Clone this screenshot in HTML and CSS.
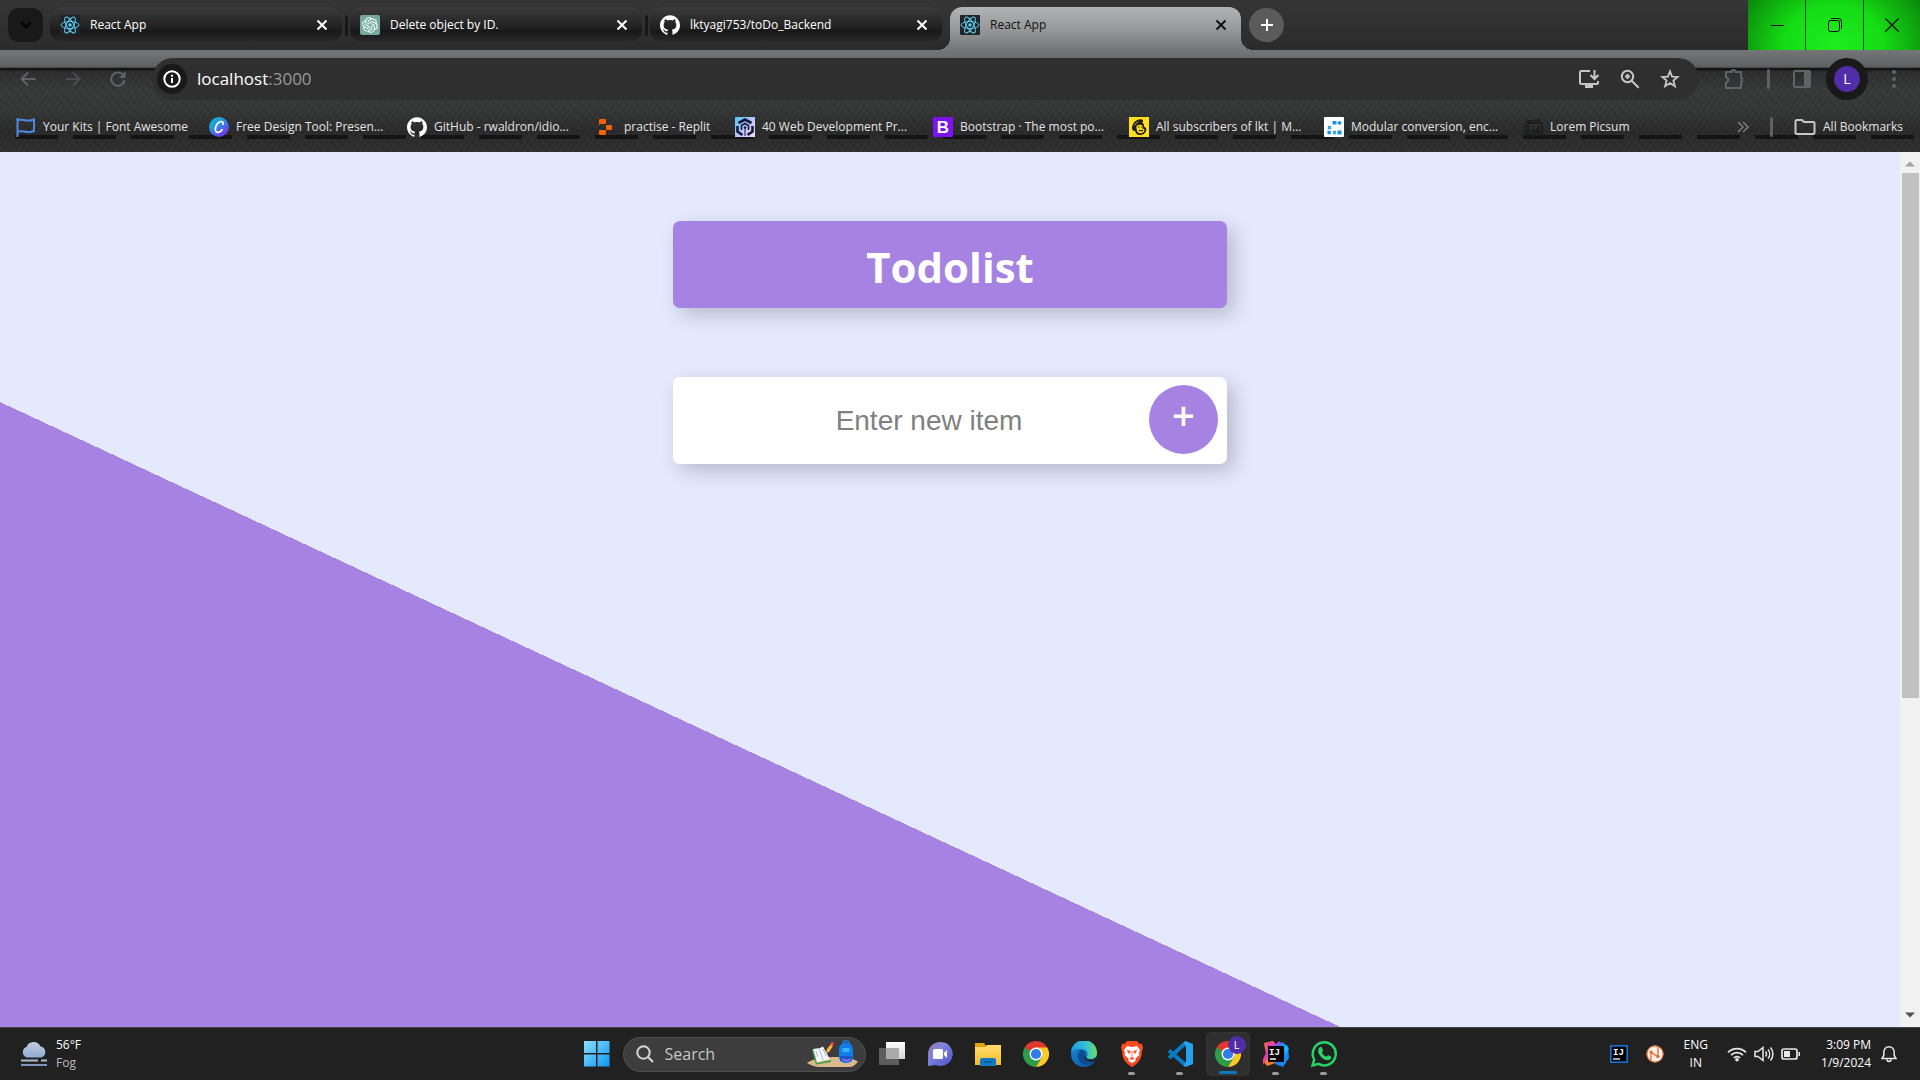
FILE: index.html
```html
<!DOCTYPE html>
<html lang="en">
<head>
<meta charset="utf-8">
<title>React App</title>
<link rel="stylesheet" href="styles.css">
</head>
<body>
<svg class="defs" width="0" height="0" aria-hidden="true">
  <defs>
    <linearGradient id="canva" x1="0" y1="0" x2=".7" y2="1"><stop offset="0" stop-color="#00c4cc"/><stop offset=".5" stop-color="#2f8ee0"/><stop offset="1" stop-color="#7d2ae8"/></linearGradient>
    <linearGradient id="web" x1="0" y1="0" x2="1" y2="1"><stop offset="0" stop-color="#49c3f5"/><stop offset=".5" stop-color="#b9c3ff"/><stop offset="1" stop-color="#ffd9f5"/></linearGradient>
    <linearGradient id="win" x1="0" y1="0" x2="1" y2="1"><stop offset="0" stop-color="#8be0ff"/><stop offset="1" stop-color="#0a96f0"/></linearGradient>
    <linearGradient id="cloud" x1="0" y1="0" x2="0" y2="1"><stop offset="0" stop-color="#c3cbd6"/><stop offset="1" stop-color="#8fadd8"/></linearGradient>
    <linearGradient id="chat" x1="0" y1="0" x2="1" y2="1"><stop offset="0" stop-color="#9b7aa8"/><stop offset=".4" stop-color="#7c83dc"/><stop offset="1" stop-color="#4b50c8"/></linearGradient>
    <linearGradient id="folder" x1="0" y1="0" x2="0" y2="1"><stop offset="0" stop-color="#ffdc70"/><stop offset="1" stop-color="#f6bd2a"/></linearGradient>
    <linearGradient id="edgeTop" x1="0" y1="0" x2="1" y2="0"><stop offset="0" stop-color="#1b9de2"/><stop offset=".6" stop-color="#35c1d0"/><stop offset="1" stop-color="#6be060"/></linearGradient>
    <linearGradient id="edgeLow" x1="0" y1="0" x2="1" y2="1"><stop offset="0" stop-color="#1b8fdc"/><stop offset="1" stop-color="#0b4a94"/></linearGradient>
    <linearGradient id="sheet" x1="0" y1="0" x2="0" y2="1"><stop offset="0" stop-color="#fff"/><stop offset="1" stop-color="#d4d4d4"/></linearGradient>
    <symbol id="react" viewBox="0 0 20 20">
      <rect width="20" height="20" rx="1" fill="#20232a"/>
      <g fill="none" stroke="#5ccfee" stroke-width="1"><ellipse cx="10" cy="10" rx="9" ry="3.5"/><ellipse cx="10" cy="10" rx="9" ry="3.5" transform="rotate(60 10 10)"/><ellipse cx="10" cy="10" rx="9" ry="3.5" transform="rotate(120 10 10)"/></g>
      <circle cx="10" cy="10" r="1.7" fill="#5ccfee"/>
    </symbol>
    <symbol id="github" viewBox="0 0 24 24"><path fill="#fff" d="M12 .297c-6.63 0-12 5.373-12 12 0 5.303 3.438 9.8 8.205 11.385.6.113.82-.258.82-.577 0-.285-.01-1.04-.015-2.04-3.338.724-4.042-1.61-4.042-1.61C4.422 18.07 3.633 17.7 3.633 17.7c-1.087-.744.084-.729.084-.729 1.205.084 1.838 1.236 1.838 1.236 1.07 1.835 2.809 1.305 3.495.998.108-.776.417-1.305.76-1.605-2.665-.3-5.466-1.332-5.466-5.93 0-1.31.465-2.38 1.235-3.22-.135-.303-.54-1.523.105-3.176 0 0 1.005-.322 3.3 1.23.96-.267 1.98-.399 3-.405 1.02.006 2.04.138 3 .405 2.28-1.552 3.285-1.23 3.285-1.23.645 1.653.24 2.873.12 3.176.765.84 1.23 1.91 1.23 3.22 0 4.61-2.805 5.625-5.475 5.92.42.36.81 1.096.81 2.22 0 1.606-.015 2.896-.015 3.286 0 .315.21.69.825.57C20.565 22.092 24 17.592 24 12.297c0-6.627-5.373-12-12-12"/></symbol>
    <symbol id="close" viewBox="0 0 12 12"><path d="M1.500 1.500l9 9M10.500 1.500l-9 9" fill="none" stroke="currentColor" stroke-width="2"/></symbol>
    <symbol id="chrome" viewBox="0 0 26 26">
      <path d="M13 13L1.740 6.500A13 13 0 0 1 24.260 6.500Z" fill="#e0392c"/>
      <path d="M13 13L1.740 6.500A13 13 0 0 0 13 26L18.600 16.300Z" fill="#2c9d4b"/>
      <path d="M13 6.500H24.260A13 13 0 0 1 13 26L18.800 16Z" fill="#fcc928"/>
      <path d="M1.740 6.500L7.400 16.200L13 6.500Z" fill="#e0392c"/><path d="M1.740 6.500L7.400 16.300L13 13Z" fill="#2c9d4b"/>
      <circle cx="13" cy="13" r="6.500" fill="#fff"/><circle cx="13" cy="13" r="5.100" fill="#2f7de9"/>
    </symbol>
  </defs>
</svg>

<header class="chrome">
  <div class="tabstrip">
    <button class="tab-search" aria-label="Search tabs"><svg width="12" height="8" viewBox="0 0 12 8"><path d="M1.500 1.500L6 6l4.500-4.500" fill="none" stroke="#000" stroke-width="2"/></svg></button>
    <nav class="tabs">
      <div class="tab"><svg class="fav"><use href="#react"/></svg><span class="tab-title">React App</span><button class="tab-close" aria-label="Close tab"><svg width="12" height="12"><use href="#close"/></svg></button></div>
      <div class="tab"><svg class="fav" viewBox="0 0 20 20"><rect width="20" height="20" rx="2" fill="#75a99c"/><g transform="translate(2.200 2.200) scale(.65)"><path fill="#fff" d="M22.282 9.821a5.985 5.985 0 0 0-.516-4.911 6.046 6.046 0 0 0-6.510-2.900A6.065 6.065 0 0 0 4.981 4.182a5.985 5.985 0 0 0-3.998 2.900 6.046 6.046 0 0 0 .743 7.097 5.980 5.980 0 0 0 .511 4.911 6.051 6.051 0 0 0 6.515 2.900A5.985 5.985 0 0 0 13.260 24a6.056 6.056 0 0 0 5.772-4.206 5.989 5.989 0 0 0 3.998-2.900 6.056 6.056 0 0 0-.748-7.073zm-9.022 12.608a4.476 4.476 0 0 1-2.876-1.041l.142-.080 4.778-2.758a.795.795 0 0 0 .393-.681v-6.737l2.020 1.169a.071.071 0 0 1 .038.052v5.583a4.504 4.504 0 0 1-4.495 4.494zm-9.661-4.125a4.471 4.471 0 0 1-.535-3.014l.142.085 4.783 2.758a.771.771 0 0 0 .781 0l5.843-3.369v2.332a.080.080 0 0 1-.033.062L9.740 19.950a4.499 4.499 0 0 1-6.141-1.646zM2.341 7.896a4.485 4.485 0 0 1 2.366-1.973V11.600a.766.766 0 0 0 .388.677l5.814 3.354-2.020 1.169a.076.076 0 0 1-.071 0l-4.830-2.787A4.504 4.504 0 0 1 2.341 7.872zm16.596 3.856L13.104 8.364 15.119 7.200a.076.076 0 0 1 .071 0l4.830 2.791a4.494 4.494 0 0 1-.677 8.104v-5.677a.790.790 0 0 0-.407-.667zm2.011-3.023l-.142-.085-4.774-2.782a.776.776 0 0 0-.785 0L9.409 9.230V6.897a.066.066 0 0 1 .028-.062l4.830-2.787a4.499 4.499 0 0 1 6.680 4.660zM8.307 12.863l-2.020-1.164a.080.080 0 0 1-.038-.057V6.074a4.499 4.499 0 0 1 7.376-3.454l-.142.081L8.704 5.459a.795.795 0 0 0-.393.681zm1.098-2.365l2.602-1.500 2.607 1.500v2.999l-2.597 1.500-2.607-1.500Z"/></g></svg><span class="tab-title">Delete object by ID.</span><button class="tab-close" aria-label="Close tab"><svg width="12" height="12"><use href="#close"/></svg></button></div>
      <div class="tab"><svg class="fav"><use href="#github"/></svg><span class="tab-title">lktyagi753/toDo_Backend</span><button class="tab-close" aria-label="Close tab"><svg width="12" height="12"><use href="#close"/></svg></button></div>
      <div class="tab tab-active"><svg class="fav"><use href="#react"/></svg><span class="tab-title">React App</span><button class="tab-close" aria-label="Close tab"><svg width="12" height="12"><use href="#close"/></svg></button></div>
    </nav>
    <button class="new-tab" aria-label="New tab"><svg width="14" height="14" viewBox="0 0 14 14"><path d="M7 1v12M1 7h12" stroke="#fff" stroke-width="2"/></svg></button>
    <div class="window-buttons">
      <button aria-label="Minimize"><svg width="14" height="14" viewBox="0 0 14 14"><path d="M1 7.500h13" stroke="#000"/></svg></button>
      <button aria-label="Restore"><svg width="14" height="14" viewBox="0 0 14 14"><g fill="none" stroke="#000"><rect x=".5" y="2.500" width="11" height="11" rx="2"/><path d="M3 .5h7.500a3 3 0 0 1 3 3V11"/></g></svg></button>
      <button aria-label="Close"><svg width="14" height="14" viewBox="0 0 14 14"><path d="M.5.500l13 13M13.500.500l-13 13" stroke="#000" stroke-width="1.200"/></svg></button>
    </div>
  </div>

  <div class="toolbar">
    <button class="nav-button" aria-label="Back"><svg width="16" height="16" viewBox="0 0 16 16"><path d="M15.500 8H2M8 1.500L1.500 8 8 14.500" fill="none" stroke="#5f6368" stroke-width="2"/></svg></button>
    <button class="nav-button" aria-label="Forward"><svg width="16" height="16" viewBox="0 0 16 16"><path d="M.5 8H14M8 1.500L14.500 8 8 14.500" fill="none" stroke="#4b4d50" stroke-width="2"/></svg></button>
    <button class="nav-button" aria-label="Reload"><svg width="16" height="16" viewBox="0 0 16 16"><path d="M13.800 4.800A6.700 6.700 0 1 0 14.600 9" fill="none" stroke="#5f6368" stroke-width="2"/><path d="M15.600 0v7H9Z" fill="#5f6368"/></svg></button>
    <div class="omnibox">
      <button class="site-info" aria-label="Site information"><svg width="18" height="18" viewBox="0 0 18 18"><circle cx="9" cy="9" r="7.700" fill="none" stroke="#fff" stroke-width="2"/><path d="M9 8v5M9 4.700v2" stroke="#fff" stroke-width="2"/></svg></button>
      <span class="url">localhost<span class="port">:3000</span></span>
      <div class="omnibox-actions">
        <svg width="22" height="20" viewBox="0 0 22 20"><path d="M12 2H3.500A1.500 1.500 0 0 0 2 3.500v10A1.500 1.500 0 0 0 3.500 15h15a1.500 1.500 0 0 0 1.500-1.500V12M16.500 1v8M12.500 6l4 4 4-4" fill="none" stroke="#c7c7c7" stroke-width="2"/><path d="M7 15h8v4H7z" fill="#c7c7c7"/></svg>
        <svg width="20" height="20" viewBox="0 0 20 20"><g fill="none" stroke="#c7c7c7" stroke-width="2"><circle cx="7.500" cy="7.500" r="5.700"/><path d="M11.700 11.700l7 7M7.500 5v5M5 7.500h5"/></g></svg>
        <svg width="20" height="20" viewBox="0 0 20 20"><path d="M10 2.300l2.100 5.300 5.700.4-4.400 3.600 1.500 5.700-4.900-3.200-4.900 3.200 1.500-5.700L2.200 8l5.700-.4z" fill="none" stroke="#c7c7c7" stroke-width="1.800"/></svg>
      </div>
    </div>
    <div class="toolbar-end">
      <button aria-label="Extensions"><svg width="22" height="22" viewBox="0 0 22 22"><path d="M3 4h5.500a2 2 0 0 1 4 0H18v5.500a2.500 2.500 0 0 1 0 4.500v6H3v-5.500c3-.5 3-5 0-5z" fill="none" stroke="#5f6368" stroke-width="2"/></svg></button>
      <i class="divider"></i>
      <button aria-label="Side panel"><svg width="20" height="20" viewBox="0 0 20 20"><rect x="2" y="2" width="16" height="16" rx="1" fill="none" stroke="#5f6368" stroke-width="2"/><path d="M12 2h6v16h-6z" fill="#5f6368"/></svg></button>
      <button class="profile" aria-label="Profile"><span>L</span></button>
      <button aria-label="Menu"><svg width="4" height="20" viewBox="0 0 4 20" fill="#5f6368"><circle cx="2" cy="3" r="2"/><circle cx="2" cy="10" r="2"/><circle cx="2" cy="17" r="2"/></svg></button>
    </div>
  </div>

  <nav class="bookmarks">
    <a href="#"><svg class="fav" viewBox="0 0 20 20"><path d="M1.500 1v19M1.500 3.500c5-3 8 2.500 16.500-1V14c-8.500 3.500-11-2-16.500 1" fill="none" stroke="#4a8be0" stroke-width="2"/></svg><span>Your Kits | Font Awesome</span></a>
    <a href="#"><svg class="fav" viewBox="0 0 20 20"><circle cx="10" cy="10" r="10" fill="url(#canva)"/><path d="M14 7.300c.8-2.600-1.500-3.500-3.600-2.200C7.500 6.800 5.800 10.500 6.500 13.500c.8 3 4.800 2.200 6.600-.8" fill="none" stroke="#fff" stroke-width="1.700" stroke-linecap="round"/></svg><span>Free Design Tool: Presen...</span></a>
    <a href="#"><svg class="fav"><use href="#github"/></svg><span>GitHub - rwaldron/idio...</span></a>
    <a href="#"><svg class="fav" viewBox="0 0 20 20" fill="#f26207"><rect x="2" y="2" width="7" height="5" rx="1"/><rect x="2" y="7" width="1" height="1"/><rect x="9" y="8" width="6" height="5" rx="1"/><rect x="2" y="13" width="7" height="5" rx="1"/></svg><span>practise - Replit</span></a>
    <a href="#"><svg class="fav" viewBox="0 0 20 20"><rect width="20" height="20" fill="url(#web)"/><path d="M3.500 6L10 2.500 16.500 6" fill="none" stroke="#141a36" stroke-width="2.600"/><path d="M2.500 9v5.500l5 3.500M17.500 9v5.500l-5 3.500" fill="none" stroke="#141a36" stroke-width="2.600"/><path d="M6.500 13V8.500L10 6.500l3.500 2V13" fill="none" stroke="#141a36" stroke-width="1.600"/><circle cx="10" cy="10.500" r="1.300" fill="#141a36"/><path d="M10 10v9" stroke="#141a36"/></svg><span>40 Web Development Pr...</span></a>
    <a href="#"><svg class="fav" viewBox="0 0 20 20"><rect width="20" height="20" rx="1" fill="#7a12f5"/><text x="10" y="16" text-anchor="middle" class="glyph-b">B</text></svg><span>Bootstrap · The most po...</span></a>
    <a href="#"><svg class="fav" viewBox="0 0 20 20"><rect width="20" height="20" fill="#ffe01b"/><path d="M3 11C3 6 8 1.500 13 2.500c2 1 1 2.500 0 3.500 2 0 2 2 2 3.500 2 1 3 2.500 2 4.500-1 3-4 4.500-7 4-2.500-.5-3.500-2.500-4-4C3.500 14 3 12.500 3 11z" fill="#241c15"/><path d="M7.500 9c2-1.500 4-1.500 6-.5v3c2 .5 2.500 1.500 1.500 3-1.500 2-4.500 2.500-6.500.5l-1-3z" fill="#ffe01b"/><path d="M9 10h1.500M12 10h1M10 13c1.500 1 3 .8 4 0" fill="none" stroke="#241c15" stroke-width="1.200"/><path d="M5 8.500l4-4" stroke="#ffe01b" stroke-width=".8"/></svg><span>All subscribers of lkt | M...</span></a>
    <a href="#"><svg class="fav" viewBox="0 0 20 20"><rect width="20" height="20" rx="1" fill="#fff"/><g fill="#1793e6"><rect x="8.500" y="4" width="4" height="3.500"/><circle cx="15.500" cy="5.800" r="1.900"/><circle cx="5.200" cy="15.500" r="1.900"/><rect x="13.500" y="13.500" width="4" height="4"/></g><path d="M4 9l3 3M7 9l-3 3M9 14l3 3M12 14l-3 3" stroke="#1793e6" stroke-width="1.300"/></svg><span>Modular conversion, enc...</span></a>
    <a href="#"><svg class="fav" viewBox="0 0 20 20"><path d="M4 6l1-2 11-1 1 2M2 7v9l2 1" fill="none" stroke="#1b1c1d" stroke-width="1.500"/><rect x="5" y="6" width="14" height="12" rx="1" fill="none" stroke="#1b1c1d" stroke-width="1.800"/><path d="M7 16l3-4 2 2 3-5 3 7z" fill="#1b1c1d"/></svg><span>Lorem Picsum</span></a>
    <div class="bookmarks-end">
      <button aria-label="More bookmarks"><svg width="12" height="12" viewBox="0 0 12 12"><path d="M1 1l5 5-5 5M6 1l5 5-5 5" fill="none" stroke="#777b80" stroke-width="1.600"/></svg></button>
      <i class="divider"></i>
      <a href="#"><svg width="22" height="18" viewBox="0 0 22 18"><path d="M2.500 2h5.500l2 2h9a1.500 1.500 0 0 1 1.500 1.500V14.500A1.500 1.500 0 0 1 19 16H3a1.500 1.500 0 0 1-1.500-1.500v-11A1.500 1.500 0 0 1 2.500 2z" fill="none" stroke="#c7c7c7" stroke-width="2"/></svg><span>All Bookmarks</span></a>
    </div>
  </nav>
</header>

<div class="viewport">
  <main class="page">
    <h1 class="heading">Todolist</h1>
    <form class="item-form">
      <input type="text" aria-label="New item" placeholder="Enter new item">
      <button type="button" aria-label="Add item">+</button>
    </form>
  </main>
  <div class="scrollbar" aria-hidden="true">
    <svg width="10" height="6" viewBox="0 0 10 6"><path d="M0 5.500L5 .5l5 5z" fill="#a3a3a3"/></svg>
    <div class="track"><div class="thumb"></div></div>
    <svg width="10" height="6" viewBox="0 0 10 6"><path d="M0 .5h10l-5 5z" fill="#505050"/></svg>
  </div>
</div>

<footer class="taskbar">
  <div class="weather">
    <svg width="26" height="26" viewBox="0 0 26 26"><path d="M6 16.500a5.500 5.500 0 0 1-.5-10.500 7.500 7.500 0 0 1 14-.5 5.600 5.600 0 0 1 .5 11z" fill="url(#cloud)"/><path d="M0 19.500h17M20 19.500h6" stroke="#aeb9ca" stroke-width="2"/><path d="M0 24h26" stroke="#8093bd" stroke-width="2"/></svg>
    <p>56°F<br><span>Fog</span></p>
  </div>
  <div class="apps">
    <button class="app" aria-label="Start"><svg width="26" height="26" viewBox="0 0 26 26"><path d="M0 0h12v12H0zM13.500 0h12v12h-12zM0 13.500h12v12H0zM13.500 13.500h12v12h-12z" fill="url(#win)"/></svg></button>
    <label class="search">
      <svg width="18" height="18" viewBox="0 0 18 18"><circle cx="7.500" cy="7.500" r="6.200" fill="none" stroke="#d8d8d8" stroke-width="2"/><path d="M12 12l5 5" stroke="#d8d8d8" stroke-width="2"/></svg>
      <input type="text" placeholder="Search" aria-label="Search">
      <svg width="52" height="28" viewBox="0 0 52 28"><path d="M0 23c3-3 15-6 26-6 12 0 23 2 25 5-3 3-5 5-9 5H14C8 27 3 25 0 23z" fill="#dbb98a"/><path d="M5 10l2-1 3 14 14-3v2l-15 2.500z" fill="#35a045"/><path d="M6 9l7-1 3-1.500 7 13-7 1-6 2z" fill="#f4f6fb"/><path d="M12 8l4 12M9 11l2 6M16 9l3 7" stroke="#b5bac8"/><path d="M19 13l1-4 4-5 2 2-4 6z" fill="#ffb13b"/><path d="M23 4l2-2.500 2.500 2-2 2.500z" fill="#e4473c"/><rect x="32" y="3" width="14" height="20" rx="6" fill="#147ce8"/><path d="M36 4c0-4 6-4 6 0" fill="none" stroke="#1c74d0" stroke-width="2"/><rect x="35" y="8" width="8" height="4" rx="2" fill="#35b4ff"/><path d="M33 16h12v5H33z" fill="#1757c7"/><path d="M35 19c3 2 6 2 9 0" fill="none" stroke="#b16af0" stroke-width="1.500"/></svg>
    </label>
    <button class="app" aria-label="Task view"><svg width="26" height="26" viewBox="0 0 26 26"><path d="M7 1h19v17H7z" fill="url(#sheet)"/><path d="M0 7h20v17H0z" fill="#777" fill-opacity=".7"/><path d="M7 7h13v11H7z" fill="#aaa"/></svg></button>
    <button class="app" aria-label="Chat"><svg width="26" height="26" viewBox="0 0 26 26"><path d="M13 1a12 12 0 1 1-4 23L1 25V13A12 12 0 0 1 13 1z" fill="url(#chat)"/><rect x="6" y="8" width="10" height="10" rx="1.500" fill="#fff"/><path d="M17 12l3-3v8l-3-3z" fill="#fff"/></svg></button>
    <button class="app" aria-label="File Explorer"><svg width="26" height="26" viewBox="0 0 26 26"><path d="M0 2h9l2 3v4H0z" fill="#e2a20e"/><path d="M0 6h10l2-2h14v20H0z" fill="url(#folder)"/><path d="M5 19a2 2 0 0 1 2-2h12a2 2 0 0 1 2 2v6H5z" fill="#0f78c8"/><path d="M9 20h8v2H9z" fill="#0a5c9e"/></svg></button>
    <button class="app" aria-label="Chrome"><svg width="26" height="26"><use href="#chrome"/></svg></button>
    <button class="app" aria-label="Edge"><svg width="26" height="26" viewBox="0 0 26 26"><circle cx="13" cy="13" r="13" fill="url(#edgeLow)"/><path d="M0 12A13 13 0 0 1 26 12c0 4-3 6-7 6-3 0-4-1-3-2.500 1-2 1-7-5-7.500C5 7.500 1 9 0 12z" fill="url(#edgeTop)"/><path d="M10 9c-4 2-5 11 2 14 5 2 10 0 12-3-5 2-11 0-11-5 0-1 .5-2.500 1-3-1-2-2-3-4-3z" fill="#0d4c91"/><path d="M14 13c-1 3 2 6 6 5.500 3 0 5-1.500 6-3.500l-1.500 5C20 22 13 20 13 15z" fill="#212121"/></svg></button>
    <button class="app app-running" aria-label="Brave"><svg width="26" height="26" viewBox="0 0 26 26"><path d="M8 0h10l2 2.500L23 3l1 4-1 3c0 7-3 12-10 16C6 22 3 17 3 10L2 7l1-4 3-.5z" fill="#fb4a20"/><path d="M8 5l5 1 5-1 3 4-1 3 .5 2-4 3.500V20L13 22l-3.500-2v-2.500l-4-3.500.5-2-1-3z" fill="#fff"/><path d="M8.500 9.500l3 1-1.500 2zM17.500 9.500l-3 1 1.500 2zM13 10v6M11 17.500l2-1 2 1-2 1z" fill="#fb4a20" stroke="#fb4a20" stroke-width=".8"/></svg></button>
    <button class="app app-running" aria-label="Visual Studio Code"><svg width="26" height="26" viewBox="0 0 26 26"><path d="M2 9.500L18.500 24M2 17L18.500 2" stroke="#087bc4" stroke-width="4"/><path d="M18.500 0L26 3v20l-7.500 3-2-1.500 2.500-4V6l-2.500-4.500z" fill="#27a0ee"/></svg></button>
    <button class="app app-running app-active" aria-label="Chrome, profile L"><svg width="26" height="26"><use href="#chrome"/></svg><span class="badge">L</span></button>
    <button class="app app-running" aria-label="IntelliJ IDEA"><svg width="26" height="26" viewBox="0 0 26 26"><path d="M1 2l9-2 5 6-3 16-8 3-4-5 3-7z" fill="#fb7b2e"/><path d="M3 3l5-3 5 4-8 12-5 8-1-4 4-8z" fill="#e63fae"/><path d="M12 4l7-3 6 4 1 12-6 9-8-3z" fill="#1688f5"/><path d="M12 4l4-4 3 4z" fill="#a547e8"/><path d="M19 3l7 4-3 7z" fill="#1bb6f7"/><rect x="5" y="5" width="16" height="16" fill="#0b0507"/><text x="6" y="14" class="glyph-ij">IJ</text><path d="M7 18h6" stroke="#fff" stroke-width="1.500"/></svg></button>
    <button class="app app-running" aria-label="WhatsApp"><svg width="26" height="26" viewBox="0 0 26 26"><path d="M1.500 24.500L3.200 18.500A11.500 11.500 0 1 1 7.600 22.900z" fill="none" stroke="#25d366" stroke-width="2.500"/><path d="M8.500 6.500c1-1 2-1 2.500.3l1 2.400c.2.800-1.200 1.800-1 2.500 1 2 2.300 3 4.200 3.900.8.100 1.400-1.600 2.300-1.400l2.400 1.200c1 .6-.2 2.900-1.300 3.400-3.500 1.400-6.900-1-9.300-3.900C7.500 12.500 6 9.200 8.500 6.500z" fill="#25d366"/></svg></button>
  </div>
  <div class="tray">
    <svg width="18" height="18" viewBox="0 0 18 18"><rect x=".8" y=".8" width="16.400" height="16.400" fill="#000" stroke="#1673d6" stroke-width="1.600"/><text x="3" y="10" class="glyph-ij">IJ</text><path d="M3 14h7" stroke="#fff" stroke-width="1.300"/></svg>
    <svg width="18" height="18" viewBox="0 0 18 18"><circle cx="9" cy="9" r="8.500" fill="#f3f0ee"/><path d="M5 12V7l7 5V6M12 1v5M5 12v4" fill="none" stroke="#f0641e" stroke-width="1.300"/><circle cx="5" cy="7" r="1.600" fill="#f0641e"/><circle cx="12" cy="11.500" r="1.600" fill="#f0641e"/><circle cx="9" cy="9" r="8" fill="none" stroke="#f0641e"/></svg>
    <p class="lang">ENG<br>IN</p>
    <div class="status">
      <svg width="20" height="16" viewBox="0 0 20 16"><g fill="none" stroke="#e8e8e8" stroke-width="1.700"><path d="M1 6.500a12.500 12.500 0 0 1 18 0M4 9.200a8.500 8.500 0 0 1 12 0M6.800 12a4.500 4.500 0 0 1 6.400 0"/></g><circle cx="10" cy="13.800" r="1.800" fill="#e8e8e8"/></svg>
      <svg width="20" height="16" viewBox="0 0 20 16"><g fill="none" stroke="#e8e8e8" stroke-width="1.500"><path d="M1 5.500h3l5-4v13l-5-4H1zM11.500 5.500a4 4 0 0 1 0 5M14 3.500a7 7 0 0 1 0 9M16.500 1.500a10 10 0 0 1 0 13"/></g></svg>
      <svg width="20" height="14" viewBox="0 0 20 14"><rect x="1" y="2" width="15" height="10" rx="2" fill="none" stroke="#e8e8e8" stroke-width="1.700"/><path d="M3 4h6v6H3zM17.500 5h1.500v4h-1.500z" fill="#e8e8e8"/></svg>
    </div>
    <p class="clock">3:09 PM<br>1/9/2024</p>
    <svg width="16" height="18" viewBox="0 0 16 18"><path d="M1 13.500l1.800-3V7a5.200 5.200 0 0 1 10.400 0v3.500l1.800 3zM6 14.500c0 2.500 4 2.500 4 0" fill="none" stroke="#e8e8e8" stroke-width="1.500"/></svg>
  </div>
</footer>
</body>
</html>
```
FILE: styles.css
```css
* { box-sizing: border-box; }

body {
  margin: 0;
  height: 100vh;
  display: flex;
  flex-direction: column;
  overflow: hidden;
  font: 12px/20px "Open Sans", "Noto Sans", sans-serif;
  color: #fff;
}

button { padding: 0; border: 0; background: none; color: inherit; font: inherit; }
svg { display: block; flex: none; }
p { margin: 0; }
.defs { position: absolute; }
.fav { width: 20px; height: 20px; }

.glyph-b { font: bold 17px "Liberation Sans", sans-serif; fill: #fff; }
.glyph-ij { font: bold 9px "Liberation Mono", monospace; fill: #fff; }

/* Browser frame with a leather-like theme */
.chrome {
  flex: none;
  background:
    repeating-linear-gradient(90deg, rgba(12, 12, 12, .75) 0 43px, transparent 43px 58px) 15px 135px / 100% 4px no-repeat,
    linear-gradient(#747678, #5f6163 90%, #444) 0 50px / 100% 18px no-repeat,
    linear-gradient(#101010, #202020) 0 68px / 100% 3px no-repeat,
    repeating-linear-gradient(125deg, rgba(255, 255, 255, .02) 0 2px, transparent 2px 5px),
    repeating-linear-gradient(48deg, rgba(0, 0, 0, .06) 0 2px, transparent 2px 7px),
    linear-gradient(#2c2c2c 70px, #373838 90px, #353636 110px, #292929 132px, #303030);
}

.tabstrip {
  display: flex;
  align-items: flex-start;
  height: 50px;
  padding-left: 8px;
  background: linear-gradient(#353535, #2b2b2b);
}
.tab-search {
  display: grid;
  place-items: center;
  width: 35px;
  height: 34px;
  margin: 8px 7px 0 0;
  border-radius: 11px;
  background: #191919;
}
.tabs { display: flex; gap: 8px; padding-top: 7px; }
.tab {
  position: relative;
  display: flex;
  align-items: center;
  width: 292px;
  height: 35px;
  padding: 1px 14px 0 10px;
  border-radius: 12px;
  background: linear-gradient(#3b3b3b, #1e1e1e 65%, #171717 68%, #2a2a2a);
}
.tab-title { flex: 1; padding-left: 10px; white-space: nowrap; }
.tab:not(:nth-last-child(-n+2))::after {
  content: "";
  position: absolute;
  left: 295px;
  top: 8px;
  width: 3px;
  height: 21px;
  border-radius: 2px;
  background: #171717;
}
.tab-active {
  width: 291px;
  height: 43px;
  padding-bottom: 8px;
  border-radius: 12px 12px 0 0;
  background: linear-gradient(#b1b3b5, #97999b 50%, #747678);
  color: #111;
}
.tab-active::before,
.tab-active::after {
  content: "";
  position: absolute;
  bottom: 0;
  width: 12px;
  height: 12px;
}
.tab-active::before { right: 100%; background: radial-gradient(circle at 0 0, transparent 12px, #77797b 12px); }
.tab-active::after { left: 100%; background: radial-gradient(circle at 100% 0, transparent 12px, #77797b 12px); }
.new-tab {
  display: grid;
  place-items: center;
  width: 35px;
  height: 34px;
  margin: 8px 0 0 8px;
  border-radius: 50%;
  background: #5b5b5b;
}
.window-buttons {
  display: grid;
  grid-template-columns: 57px 58px 57px;
  height: 50px;
  margin-left: auto;
  background: radial-gradient(ellipse 110px 90px at 50% 90%, #1fed1f, #15dc15 45%, #0b8c0b 90%, #097009);
}
.window-buttons button { display: grid; place-items: center; }
.window-buttons button + button { border-left: 1px solid #0d4a0d; }

.toolbar {
  display: flex;
  align-items: center;
  height: 50px;
  padding: 8px 24px 0 5px;
}
.nav-button { display: grid; place-items: center; width: 45px; }
.omnibox {
  flex: 1;
  display: flex;
  align-items: center;
  height: 42px;
  margin-left: 12px;
  padding: 0 19px 0 5px;
  border-radius: 21px;
  background: #2f2f2f;
}
.site-info {
  display: grid;
  place-items: center;
  width: 30px;
  height: 30px;
  border-radius: 50%;
  background: #191919;
}
.url { flex: 1; padding-left: 10px; font-size: 17px; }
.port { color: #999; }
.omnibox-actions { display: flex; align-items: center; gap: 20px; }
.toolbar-end { display: flex; align-items: center; gap: 22px; padding-left: 24px; }
.divider { width: 3px; height: 20px; border-radius: 2px; background: #606164; }
.profile {
  display: grid;
  place-items: center;
  width: 42px;
  height: 42px;
  margin: 0 2px 0 -8px;
  border-radius: 50%;
  background: #191919;
}
.profile span { width: 26px; border-radius: 50%; background: #512da8; font-size: 14px; line-height: 26px; }

.bookmarks {
  display: grid;
  grid-template-columns: 193px 198px 190px 138px 198px 196px 195px 199px 1fr auto;
  align-items: center;
  height: 52px;
  padding: 1px 17px 0 16px;
}
.bookmarks a { display: flex; align-items: center; gap: 7px; color: #e4e4e4; text-decoration: none; white-space: nowrap; }
.bookmarks-end { display: flex; align-items: center; gap: 21px; }

/* Web page */
.viewport { flex: 1; display: flex; min-height: 0; background: #e4e9fd; }
.page {
  flex: 1;
  padding-top: 69px;
  background: linear-gradient(25deg, #a682e3 50%, #e4e9fd 50%) 0 0 / 100% 1386px no-repeat;
}
.heading,
.item-form {
  width: 554px;
  height: 87px;
  margin: 0 auto 69px;
  border-radius: 7px;
  box-shadow: 7px 7px 20px rgba(0, 0, 0, .2);
}
.heading {
  background: #a682e3;
  text-align: center;
  font-size: 42px;
  line-height: 92px;
}
.item-form {
  display: flex;
  align-items: center;
  padding: 0 9px 2px 36px;
  background: #fff;
}
.item-form input {
  flex: 1;
  min-width: 0;
  height: 80px;
  padding-top: 3px;
  border: 0;
  background: none;
  color: #333;
  font: 28px "Liberation Sans", sans-serif;
  text-align: center;
}
.item-form input::placeholder { color: #808080; }
.item-form button {
  width: 69px;
  height: 69px;
  padding-bottom: 9px;
  border-radius: 50%;
  background: #a682e3;
  font-size: 40px;
  font-weight: 600;
  line-height: 60px;
}
.scrollbar {
  display: flex;
  flex-direction: column;
  align-items: center;
  width: 20px;
  padding: 9px 0;
  background: #f1f1f1;
}
.track { flex: 1; width: 100%; padding: 6px 1px 6px 2px; }
.thumb { height: 63%; background: #c1c1c1; }

/* Desktop taskbar */
.taskbar {
  flex: none;
  display: grid;
  grid-template-columns: 1fr auto 1fr;
  align-items: center;
  height: 53px;
  border-top: 1px solid #444;
  background: #212121;
  line-height: 18px;
}
.weather { display: flex; align-items: center; gap: 9px; padding-left: 21px; }
.weather span { color: #bbb; }
.apps { display: flex; align-items: center; }
.app {
  position: relative;
  display: grid;
  place-items: center;
  width: 44px;
  height: 44px;
  margin: 0 2px;
  border-radius: 5px;
}
.app-running::after {
  content: "";
  position: absolute;
  bottom: 1px;
  width: 7px;
  height: 3px;
  border-radius: 2px;
  background: #9a9a9a;
}
.app-active { background: #2f2f2f; border: 1px solid #353535; }
.app-active::after { width: 18px; background: #0c79bb; }
.badge {
  position: absolute;
  top: 3px;
  right: 3px;
  width: 18px;
  border-radius: 50%;
  background: #512da8;
  font-size: 11px;
  line-height: 18px;
  text-align: center;
}
.search {
  display: flex;
  align-items: center;
  gap: 11px;
  width: 243px;
  height: 35px;
  margin: 0 2px;
  padding: 0 6px 0 12px;
  border: 1px solid #505050;
  border-radius: 18px;
  background: #3d3d3d;
}
.search input { flex: 1; min-width: 0; padding: 0; border: 0; background: none; font: 16px "Open Sans", sans-serif; }
.search input::placeholder { color: #c8c8c8; }
.tray { display: flex; align-items: center; justify-content: flex-end; padding-right: 23px; }
.tray > svg:first-child { margin-right: 18px; }
.lang { margin: 0 19px 0 20px; text-align: center; }
.status { display: flex; align-items: center; gap: 7px; }
.clock { margin: 0 10px 0 20px; text-align: right; }
```
